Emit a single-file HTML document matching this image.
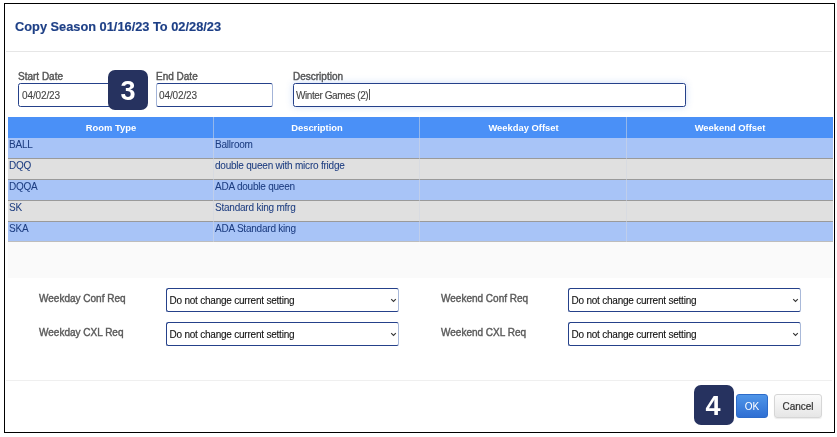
<!DOCTYPE html>
<html><head><meta charset="utf-8">
<style>
html,body{will-change:transform;margin:0;padding:0;background:#fff;width:837px;height:437px;overflow:hidden;font-family:"Liberation Sans",sans-serif;}
.a{position:absolute;}
#dlg{left:4px;top:3px;width:831px;height:430px;box-sizing:border-box;border:1px solid #000;background:#fff;}
.title{left:15px;top:21px;font-size:12.8px;font-weight:bold;color:#1d3f86;-webkit-text-stroke:0.15px #1d3f86;white-space:nowrap;line-height:12.8px;}
.sep{background:#e6e6e6;height:1px;}
.lbl{font-size:10px;color:#555;white-space:nowrap;line-height:10px;-webkit-text-stroke:0.4px #555;}
.inp{box-sizing:border-box;height:24px;border:1px solid #25418a;border-radius:2.5px;background:#fff;}
.itx{font-size:10px;letter-spacing:-0.12px;color:#444;white-space:nowrap;line-height:11px;-webkit-text-stroke:0.1px #444;}
.badge{width:40px;height:40px;border-radius:7px;background:#26325f;color:#fff;font-weight:bold;font-size:27px;text-align:center;line-height:43px;}
.th{top:117px;height:21px;background:#4a90f7;}
.thc{font-size:9.4px;font-weight:bold;color:#fff;text-align:center;line-height:11px;top:122px;white-space:nowrap;}
.row{left:8px;width:825px;box-sizing:border-box;border-bottom:1px solid #9a9a9a;}
.blue{background:#a8c4f7;}
.gray{background:#e0e0e0;}
.td{font-size:10px;letter-spacing:-0.22px;color:#1d3d80;white-space:nowrap;line-height:11px;-webkit-text-stroke:0.05px #1d3d80;}
.vl{width:1px;background:rgba(210,215,225,.55);}
.sel{box-sizing:border-box;height:24px;border:1px solid #25418a;border-right-color:#a9b9d9;border-radius:2.5px;background:#fff;}
.stx{font-size:10px;letter-spacing:-0.22px;color:#111;white-space:nowrap;line-height:11px;-webkit-text-stroke:0.1px #111;}
.flbl{font-size:10px;color:#5a5a5a;white-space:nowrap;line-height:10px;-webkit-text-stroke:0.4px #5a5a5a;}
.btn-ok{left:736px;top:394px;width:32px;height:24px;box-sizing:border-box;border-radius:3px;background:linear-gradient(#4f95e8,#2f6fd3);border:1px solid #2d6bc9;color:#fff;font-size:10px;line-height:23px;text-align:center;}
.btn-cancel{left:774px;top:394px;width:48px;height:24px;box-sizing:border-box;border-radius:3px;background:linear-gradient(#fbfbfb,#e6e6e6);border:1px solid #d6d6d6;box-shadow:0 1px 1px rgba(0,0,0,.08);color:#333;-webkit-text-stroke:0.2px #333;font-size:10px;line-height:23px;text-align:center;}
</style></head><body>
<div class="a" id="dlg"></div>
<div class="a title">Copy Season 01/16/23 To 02/28/23</div>
<div class="a sep" style="left:6px;top:51px;width:826px;"></div>

<div class="a lbl" style="left:18px;top:72px;">Start Date</div>
<div class="a lbl" style="left:156px;top:72px;">End Date</div>
<div class="a lbl" style="left:293px;top:72px;">Description</div>
<div class="a inp" style="left:18px;top:83px;width:117px;"></div>
<div class="a inp" style="left:156px;top:83px;width:117px;border-left-color:#a3b4d8;border-right-color:#a3b4d8;"></div>
<div class="a inp" style="left:293px;top:83px;width:393px;box-shadow:0 0 7px rgba(90,140,230,.3);"></div>
<div class="a itx" style="left:22px;top:90px;">04/02/23</div>
<div class="a itx" style="left:159px;top:90px;">04/02/23</div>
<div class="a itx" style="left:296px;top:90px;letter-spacing:-0.42px">Winter Games (2)</div>
<div class="a" style="left:369px;top:89px;width:1px;height:11px;background:#555;"></div>
<div class="a badge" style="left:108px;top:70px;">3</div>

<!-- table -->
<div class="a th" style="left:8px;width:825px;"></div>
<div class="a thc" style="left:8px;width:206px;">Room Type</div>
<div class="a thc" style="left:214px;width:206px;">Description</div>
<div class="a thc" style="left:420px;width:207px;">Weekday Offset</div>
<div class="a thc" style="left:627px;width:206px;">Weekend Offset</div>

<div class="a row blue" style="top:138px;height:21px;"></div>
<div class="a row gray" style="top:159px;height:21px;"></div>
<div class="a row blue" style="top:180px;height:21px;"></div>
<div class="a row gray" style="top:201px;height:21px;"></div>
<div class="a row blue" style="top:222px;height:20px;border-bottom-color:#bdbdbd;"></div>

<div class="a vl" style="left:213px;top:117px;height:125px;"></div>
<div class="a vl" style="left:419px;top:117px;height:125px;"></div>
<div class="a vl" style="left:626px;top:117px;height:125px;"></div>

<div class="a td" style="left:9px;top:139px;">BALL</div>
<div class="a td" style="left:215px;top:139px;">Ballroom</div>
<div class="a td" style="left:9px;top:160px;">DQQ</div>
<div class="a td" style="left:215px;top:160px;">double queen with micro fridge</div>
<div class="a td" style="left:9px;top:181px;">DQQA</div>
<div class="a td" style="left:215px;top:181px;">ADA double queen</div>
<div class="a td" style="left:9px;top:202px;">SK</div>
<div class="a td" style="left:215px;top:202px;">Standard king mfrg</div>
<div class="a td" style="left:9px;top:223px;">SKA</div>
<div class="a td" style="left:215px;top:223px;">ADA Standard king</div>

<div class="a" style="left:8px;top:242px;width:825px;height:36px;background:#fafafa;"></div>

<div class="a flbl" style="left:39px;top:294px;">Weekday Conf Req</div>
<div class="a flbl" style="left:39px;top:328px;">Weekday CXL Req</div>
<div class="a flbl" style="left:441px;top:294px;">Weekend Conf Req</div>
<div class="a flbl" style="left:441px;top:328px;">Weekend CXL Req</div>

<div class="a sel" style="left:166px;top:288px;width:233px;"></div>
<div class="a sel" style="left:166px;top:322px;width:233px;"></div>
<div class="a sel" style="left:568px;top:288px;width:233px;"></div>
<div class="a sel" style="left:568px;top:322px;width:233px;"></div>
<div class="a stx" style="left:169.5px;top:295px;">Do not change current setting</div>
<div class="a stx" style="left:169.5px;top:329px;">Do not change current setting</div>
<div class="a stx" style="left:571.5px;top:295px;">Do not change current setting</div>
<div class="a stx" style="left:571.5px;top:329px;">Do not change current setting</div>

<div class="a sep" style="left:6px;top:380px;width:826px;background:#efefef;"></div>
<div class="a badge" style="left:694px;top:385px;text-indent:-2px;">4</div>
<svg class="a" style="left:390px;top:298px" width="7" height="5" viewBox="0 0 7 5"><path d="M1.2 1.2 L3.5 3.5 L5.8 1.2" fill="none" stroke="#333" stroke-width="1.1"/></svg>
<svg class="a" style="left:390px;top:332px" width="7" height="5" viewBox="0 0 7 5"><path d="M1.2 1.2 L3.5 3.5 L5.8 1.2" fill="none" stroke="#333" stroke-width="1.1"/></svg>
<svg class="a" style="left:792px;top:298px" width="7" height="5" viewBox="0 0 7 5"><path d="M1.2 1.2 L3.5 3.5 L5.8 1.2" fill="none" stroke="#333" stroke-width="1.1"/></svg>
<svg class="a" style="left:792px;top:332px" width="7" height="5" viewBox="0 0 7 5"><path d="M1.2 1.2 L3.5 3.5 L5.8 1.2" fill="none" stroke="#333" stroke-width="1.1"/></svg>
<div class="a btn-ok">OK</div>
<div class="a btn-cancel">Cancel</div>
</body></html>
